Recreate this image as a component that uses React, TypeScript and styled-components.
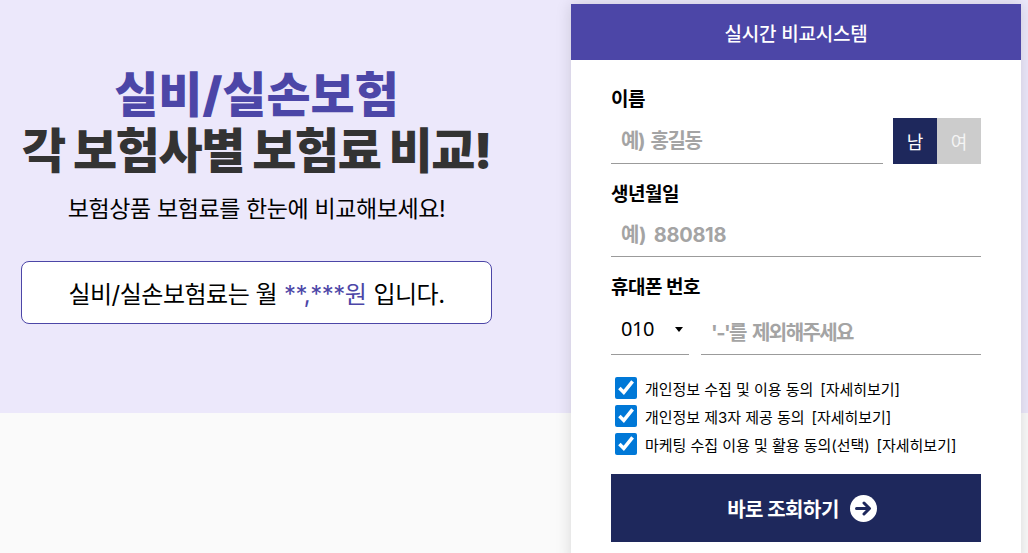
import React from "react";
import styled, { createGlobalStyle } from "styled-components";

const GlobalStyle = createGlobalStyle`
  html, body {
    margin: 0;
    padding: 0;
    height: 100%;
    overflow: hidden;
  }
  * {
    box-sizing: border-box;
  }
  body {
    font-family: Inter, "Noto Sans CJK KR", sans-serif;
  }
`;

const Page = styled.div`
  display: flex;
  align-items: flex-start;
  height: 553px;
  overflow: hidden;
  padding-left: 21px;
  background: linear-gradient(#ece8fb 413px, #fafafa 413px);
`;

const Hero = styled.section`
  width: 471px;
  flex-shrink: 0;
  padding-top: 67px;
  text-align: center;
`;

const Title = styled.h1`
  margin: 0;
  font-size: 48px;
  line-height: 56px;
  font-weight: 900;
  letter-spacing: -1.4px;
  white-space: nowrap;
  color: #333333;
  & em {
    display: block;
    font-style: normal;
    letter-spacing: 0;
    color: #4c46a7;
  }
`;

const Lead = styled.p`
  margin: 14px 0 0;
  font-size: 23px;
  line-height: 32px;
  color: #000000;
  letter-spacing: -0.4px;
`;

const PriceBox = styled.div`
  height: 63px;
  margin-top: 36px;
  display: flex;
  align-items: center;
  justify-content: center;
  background: #ffffff;
  border: 1px solid #4c46a7;
  border-radius: 8px;
  font-size: 24px;
  letter-spacing: -0.5px;
  color: #000000;
  & span {
    color: #4c46a7;
    margin: 0 7px;
  }
`;

const Panel = styled.aside`
  width: 450px;
  flex-shrink: 0;
  margin: 4px 0 0 79px;
  background: #ffffff;
  box-shadow: 0 0 15px rgba(0, 0, 0, 0.14);
  height: 560px;
`;

const PanelHeader = styled.header`
  height: 56px;
  display: flex;
  align-items: center;
  justify-content: center;
  background: #4c46a7;
  color: #ffffff;
  font-size: 19px;
  font-weight: 500;
  letter-spacing: -0.2px;
`;

const Form = styled.form`
  padding: 28px 40px 0;
`;

const Label = styled.label`
  display: block;
  font-size: 19px;
  line-height: 24px;
  font-weight: 700;
  color: #000000;
  letter-spacing: -0.5px;
  margin-bottom: 6px;
`;

const Row = styled.div<{ $gap: number }>`
  display: flex;
  gap: ${(p) => p.$gap}px;
  margin-bottom: 19px;
`;

const TextInput = styled.input<{ $tracking: number }>`
  flex: 1;
  min-width: 0;
  width: 100%;
  height: 46px;
  padding: 0 10px;
  border: 0;
  border-bottom: 1px solid #9b9b9b;
  border-radius: 0;
  outline: none;
  background: transparent;
  font: 700 20px Inter, "Noto Sans CJK KR", sans-serif;
  letter-spacing: ${(p) => p.$tracking}px;
  word-spacing: 3px;
  &::placeholder {
    color: #a4a4a4;
    opacity: 1;
  }
`;

const BirthInput = styled(TextInput)`
  height: 44px;
`;

const GenderGroup = styled.div`
  display: flex;
  flex-shrink: 0;
`;

const GenderButton = styled.button<{ $active?: boolean }>`
  width: 44px;
  height: 46px;
  padding: 0;
  border: 0;
  background: ${(p) => (p.$active ? "#1e285c" : "#cccccc")};
  color: ${(p) => (p.$active ? "#ffffff" : "#f4f4f4")};
  font: 400 18px Inter, "Noto Sans CJK KR", sans-serif;
`;

const SelectWrap = styled.div`
  position: relative;
  width: 78px;
  flex-shrink: 0;
  &::after {
    content: "";
    position: absolute;
    left: 64px;
    top: 21px;
    border-left: 4px solid transparent;
    border-right: 4px solid transparent;
    border-top: 5px solid #000000;
    pointer-events: none;
  }
`;

const CodeSelect = styled.select`
  width: 100%;
  height: 49px;
  padding: 0 10px 3px;
  appearance: none;
  border: 0;
  border-bottom: 1px solid #9b9b9b;
  border-radius: 0;
  background: transparent;
  outline: none;
  color: #000000;
  letter-spacing: -0.5px;
  font: 400 20px "Noto Sans", "Noto Sans CJK KR", sans-serif;
`;

const PhoneInput = styled(TextInput)`
  height: 49px;
  padding-top: 6px;
`;

const Terms = styled.div`
  display: flex;
  flex-direction: column;
  gap: 6px;
  padding-left: 4px;
  margin-top: 22px;
`;

const Term = styled.label`
  display: flex;
  align-items: center;
  height: 22px;
  font-size: 15px;
  letter-spacing: -0.03px;
  color: #000000;
  & a {
    margin-left: 7px;
    color: inherit;
  }
`;

const TermCheck = styled.input`
  flex-shrink: 0;
  width: 22px;
  height: 22px;
  margin: 0 8px 0 0;
  accent-color: #0078d7;
`;

const Submit = styled.button`
  width: 100%;
  height: 68px;
  margin-top: 19px;
  padding-left: 18px;
  display: flex;
  align-items: center;
  justify-content: center;
  gap: 11px;
  border: 0;
  background: #1e285c;
  color: #ffffff;
  font: 700 20px Inter, "Noto Sans CJK KR", sans-serif;
  letter-spacing: -0.5px;
`;

const ArrowCircle = () => (
  <svg width="27" height="27" viewBox="0 0 27 27" aria-hidden="true">
    <circle cx="13.5" cy="13.5" r="13.5" fill="#ffffff" />
    <path
      d="M6.5 13.5H19M14 8l5.5 5.5L14 19"
      fill="none"
      stroke="#1e285c"
      strokeWidth="3"
      strokeLinecap="round"
      strokeLinejoin="round"
    />
  </svg>
);

const terms = [
  "개인정보 수집 및 이용 동의",
  "개인정보 제3자 제공 동의",
  "마케팅 수집 이용 및 활용 동의(선택)",
];

export default function App() {
  return (
    <>
      <GlobalStyle />
      <Page>
        <Hero>
          <Title>
            <em>실비/실손보험</em>각 보험사별 보험료 비교!
          </Title>
          <Lead>보험상품 보험료를 한눈에 비교해보세요!</Lead>
          <PriceBox>
            실비/실손보험료는 월<span>**,***원</span>입니다.
          </PriceBox>
        </Hero>
        <Panel>
          <PanelHeader>실시간 비교시스템</PanelHeader>
          <Form>
            <Label>이름</Label>
            <Row $gap={10}>
              <TextInput $tracking={-1.4} placeholder="예) 홍길동" />
              <GenderGroup>
                <GenderButton type="button" $active>
                  남
                </GenderButton>
                <GenderButton type="button">여</GenderButton>
              </GenderGroup>
            </Row>
            <Label>생년월일</Label>
            <Row $gap={0}>
              <BirthInput $tracking={-0.3} placeholder="예) 880818" />
            </Row>
            <Label>휴대폰 번호</Label>
            <Row $gap={12}>
              <SelectWrap>
                <CodeSelect defaultValue="010">
                  <option>010</option>
                  <option>011</option>
                </CodeSelect>
              </SelectWrap>
              <PhoneInput $tracking={-1.6} placeholder="'-'를 제외해주세요" />
            </Row>
            <Terms>
              {terms.map((term) => (
                <Term key={term}>
                  <TermCheck type="checkbox" defaultChecked />
                  {term}
                  <a>[자세히보기]</a>
                </Term>
              ))}
            </Terms>
            <Submit type="button">
              바로 조회하기
              <ArrowCircle />
            </Submit>
          </Form>
        </Panel>
      </Page>
    </>
  );
}
